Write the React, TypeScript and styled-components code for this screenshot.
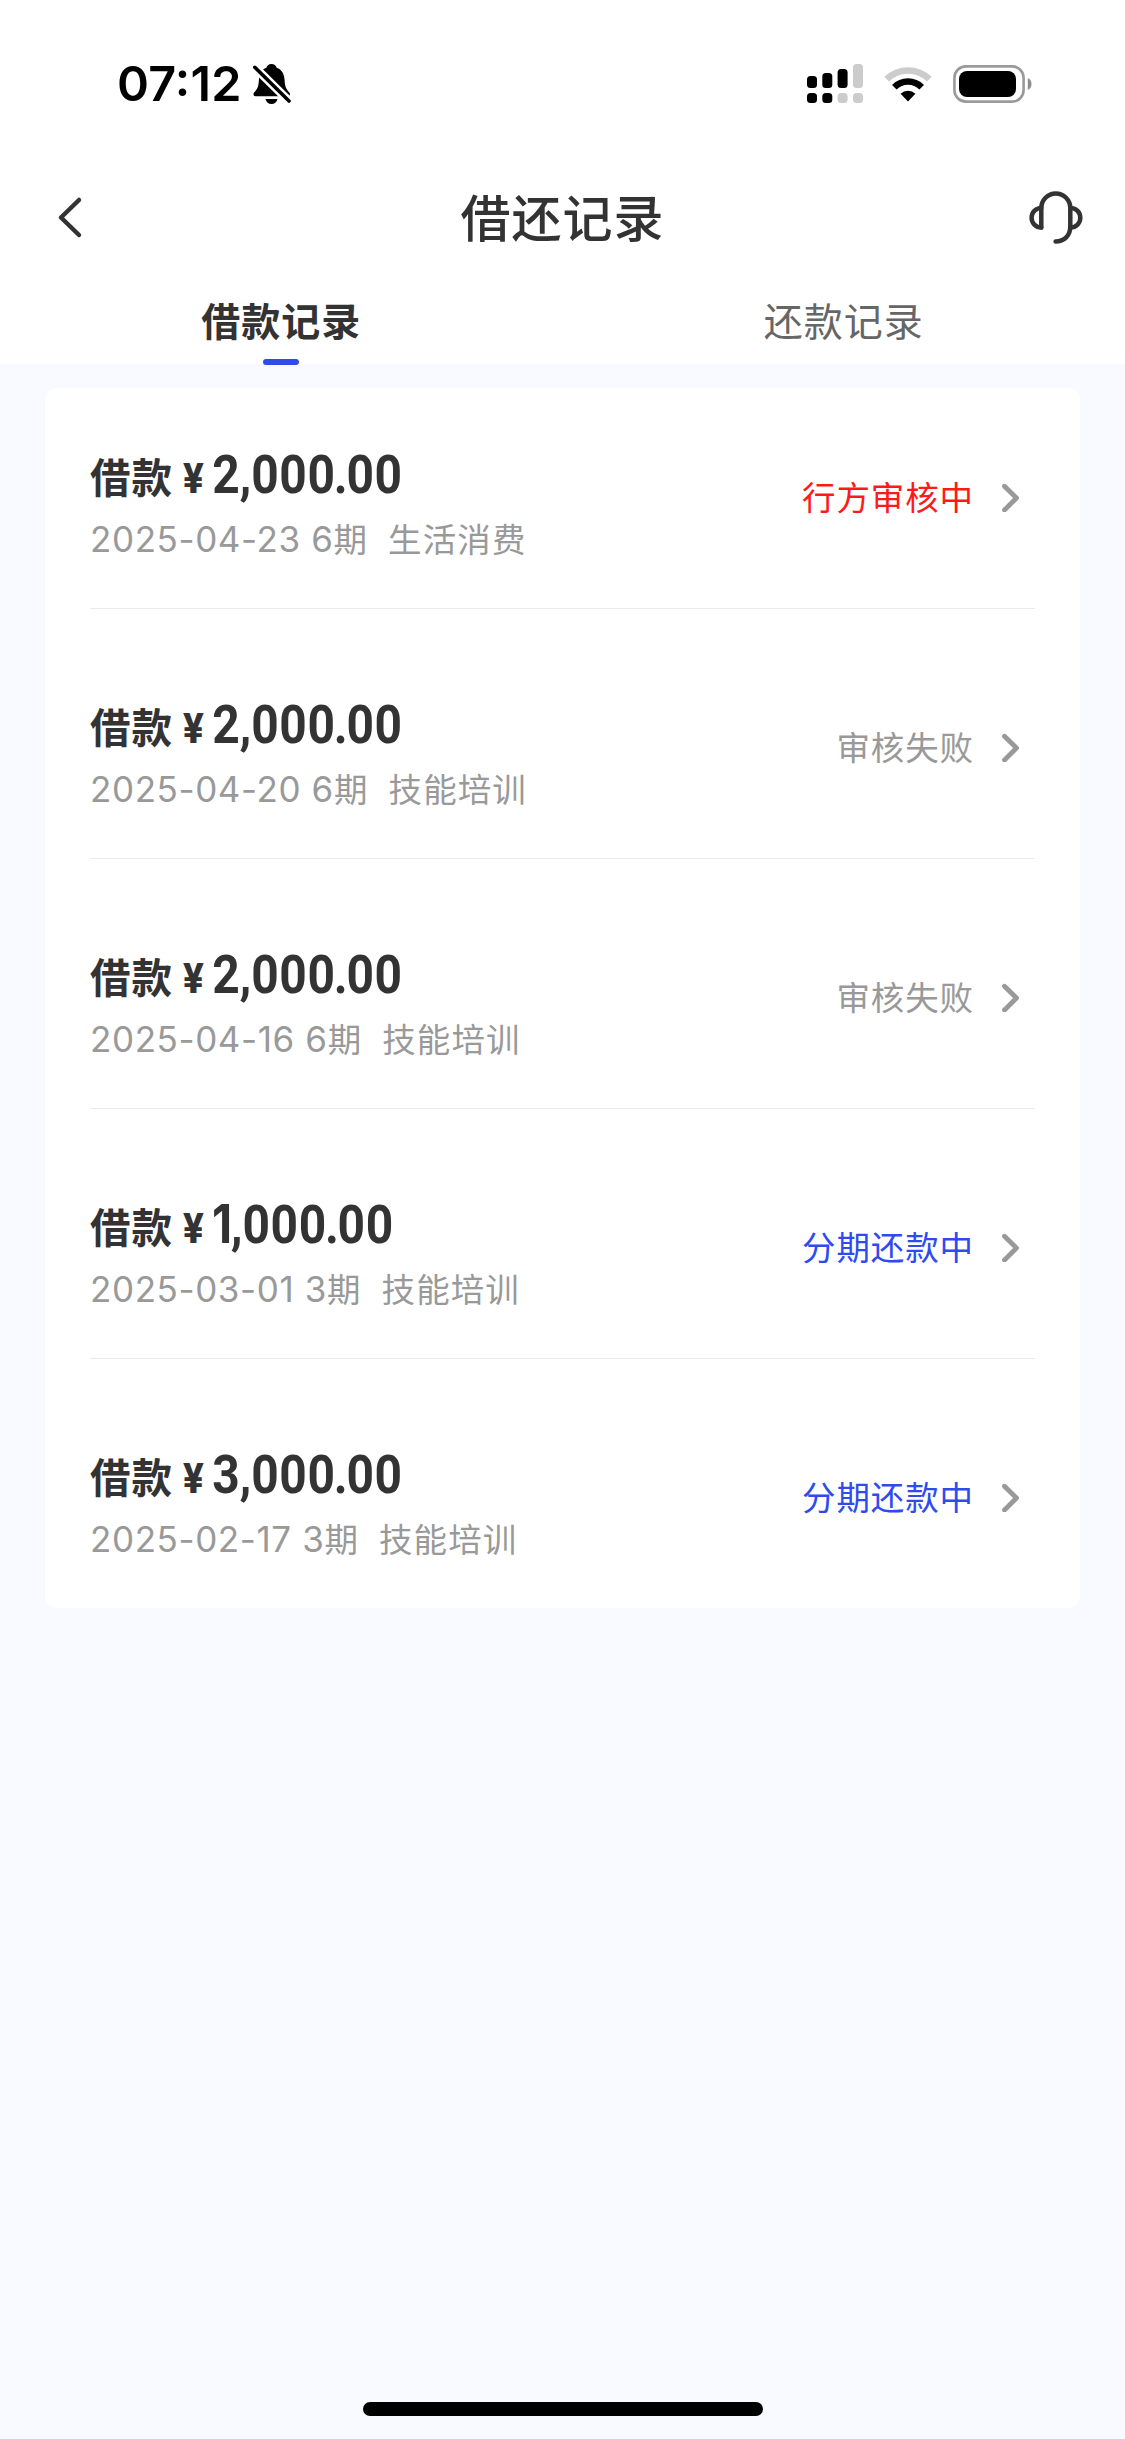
import React from "react";
import styled, { createGlobalStyle } from "styled-components";

const GlobalStyle = createGlobalStyle`
  * { box-sizing: border-box; }
  html, body { margin: 0; padding: 0; background: #f8faff; }
  body { font-family: Inter, "Noto Sans CJK SC", sans-serif; color: #333; }
`;

const Screen = styled.div`
  width: 1125px;
  height: 2439px;
  display: flex;
  flex-direction: column;
  background: #f8faff;
  overflow: hidden;
`;

const Header = styled.header`
  height: 364px;
  background: #fff;
  display: flex;
  flex-direction: column;
`;

const StatusBar = styled.div`
  height: 162px;
  padding: 6px 93px 0 117px;
  display: flex;
  align-items: center;
  justify-content: space-between;
`;

const Cluster = styled.div<{ $gap: number }>`
  display: flex;
  align-items: center;
  gap: ${(p) => p.$gap}px;
`;

const Time = styled.span`
  width: 124px;
  font-size: 48.5px;
  line-height: 58px;
  font-weight: 600;
  letter-spacing: 0.2px;
  font-feature-settings: "case";
  color: #000;
  white-space: nowrap;
`;

const Icon = styled.svg`
  display: block;
  flex: none;
`;

const NavBar = styled.nav`
  height: 110px;
  padding: 0 40px 0 56px;
  display: grid;
  grid-template-columns: 60px 1fr 60px;
  align-items: center;
  & > :last-child { justify-self: end; }
`;

const Title = styled.h1`
  margin: 0;
  padding: 0 16px 5px 0;
  text-align: center;
  font-family: "Noto Sans CJK SC", sans-serif;
  font-size: 50px;
  line-height: 74px;
  font-weight: 500;
  letter-spacing: 1px;
`;

const Tabs = styled.div`
  height: 92px;
  display: grid;
  grid-template-columns: 1fr 1fr;
`;

const Tab = styled.div<{ $active?: boolean }>`
  height: 93px;
  padding-top: 18px;
  display: flex;
  flex-direction: column;
  align-items: center;
  justify-content: space-between;
  font-family: "Noto Sans CJK SC", sans-serif;
  font-size: 39px;
  line-height: 58px;
  letter-spacing: 1px;
  font-weight: ${(p) => (p.$active ? 700 : 400)};
  color: ${(p) => (p.$active ? "#333" : "#666")};
`;

const Indicator = styled.span`
  width: 36px;
  height: 6px;
  border-radius: 3px;
  background: #2f4be8;
`;

const Card = styled.main`
  margin: 24px 45px 0;
  height: 1220px;
  border-radius: 12px;
  background: #fff;
  padding: 0 45px;
  display: flex;
  flex-direction: column;
`;

const Row = styled.div`
  height: 250px;
  padding: 85px 14px 0 0;
  border-bottom: 1px solid #ebebeb;
  display: flex;
  justify-content: space-between;
  &:first-child { height: 221px; padding-top: 56px; }
  &:last-child { height: 249px; border-bottom: 0; }
`;

const Info = styled.div`
  display: flex;
  flex-direction: column;
  gap: 7px;
`;

const AmountLine = styled.div`
  height: 62px;
  display: flex;
  align-items: baseline;
`;

const Label = styled.span`
  width: 93px;
  font-family: "Noto Sans CJK SC", sans-serif;
  font-weight: 700;
  font-size: 40.5px;
  line-height: 60px;
  letter-spacing: 1px;
`;

const Yen = styled.span`
  width: 29px;
  font-family: Roboto, sans-serif;
  font-weight: 800;
  font-size: 42px;
  line-height: 60px;
  transform: scaleX(0.92);
  transform-origin: left;
`;

const Amount = styled.span`
  display: flex;
  align-items: baseline;
  font-family: Roboto, sans-serif;
  font-weight: 700;
  font-size: 54.5px;
  line-height: 60px;
  transform: scaleX(0.88);
  transform-origin: left;
`;

const Glyph = styled.span<{ $w: number }>`
  width: ${(p) => p.$w}px;
  display: flex;
  justify-content: center;
`;

const NarrowOne = styled(Glyph)`
  font-family: Inter, sans-serif;
  font-size: 53px;
  justify-content: flex-start;
`;

const Meta = styled.div`
  height: 50px;
  display: flex;
  align-items: baseline;
  font-family: "Noto Sans CJK SC", sans-serif;
  font-size: 33.5px;
  line-height: 50px;
  letter-spacing: 1.1px;
  color: #999;
`;

const Digits = styled.span`
  font-family: Inter, sans-serif;
  font-size: 35px;
  letter-spacing: 0.6px;
  white-space: pre;
`;

const Purpose = styled.span`
  margin-left: 20px;
`;

const Status = styled.div<{ $tone: string }>`
  height: 50px;
  margin-top: 27px;
  display: flex;
  align-items: center;
  gap: 27px;
  font-family: "Noto Sans CJK SC", sans-serif;
  font-size: 33.5px;
  line-height: 50px;
  letter-spacing: 0.9px;
  color: ${(p) => p.$tone};
`;

const HomeIndicator = styled.div`
  width: 400px;
  height: 14px;
  border-radius: 7px;
  background: #000;
  margin: auto auto 23px 363px;
`;

const records = [
  { amount: "2,000.00", date: "2025-04-23", terms: 6, use: "生活消费", status: "行方审核中", tone: "#ff1a1a" },
  { amount: "2,000.00", date: "2025-04-20", terms: 6, use: "技能培训", status: "审核失败", tone: "#999" },
  { amount: "2,000.00", date: "2025-04-16", terms: 6, use: "技能培训", status: "审核失败", tone: "#999" },
  { amount: "1,000.00", date: "2025-03-01", terms: 3, use: "技能培训", status: "分期还款中", tone: "#2f4bf0" },
  { amount: "3,000.00", date: "2025-02-17", terms: 3, use: "技能培训", status: "分期还款中", tone: "#2f4bf0" },
];

const BellOff = () => (
  <Icon width="38" height="42" viewBox="0 0 38 42">
    <path d="M18.500 1c2.700 0 4.600 1.700 5.200 3.700 5.200 1.800 7.600 6.400 7.900 12.300.3 6.500 1.500 9.200 4.700 12.400 1.200 1.300.9 3.800-1.300 3.800H2.600C.3 33.200-.1 30.700 1.200 29.400c3.200-3.200 4.400-5.900 4.700-12.400.3-5.900 2.700-10.500 7.500-12.300C13.900 2.700 15.800 1 18.500 1z" />
    <path d="M12.500 36h12c-.6 3-3 5-6 5s-5.400-2-6-5z" />
    <path d="M0 2.500 38 40" stroke="#fff" strokeWidth="8.500" />
    <path d="M1.800 4.300 36 38" stroke="#000" strokeWidth="3.600" strokeLinecap="round" />
  </Icon>
);

const Signal = () => (
  <Icon width="56" height="40" viewBox="0 0 56 40">
    <rect x="0" y="12" width="10" height="12" rx="3.500" />
    <rect x="15.300" y="9" width="10" height="15" rx="3.500" />
    <rect x="30.600" y="5" width="10" height="19" rx="3.500" />
    <rect x="46" y="0" width="10" height="24" rx="3.500" fill="#ccc" />
    <rect x="0" y="29" width="10" height="10" rx="3.500" />
    <rect x="15.300" y="29" width="10" height="10" rx="3.500" />
    <rect x="30.600" y="29" width="10" height="10" rx="3.500" fill="#ccc" />
    <rect x="46" y="29" width="10" height="10" rx="3.500" fill="#ccc" />
  </Icon>
);

const Wifi = () => (
  <Icon width="48" height="36" viewBox="0 0 48 36">
    <path d="M2.700 13.200a30.500 30.500 0 0 1 42.600 0" fill="none" stroke="#ccc" strokeWidth="6.500" />
    <path d="M10.300 21.200a19.500 19.500 0 0 1 27.400 0" fill="none" stroke="#000" strokeWidth="6.500" />
    <path d="M16.600 27.700a10.800 10.800 0 0 1 14.800 0L24 35.400z" />
  </Icon>
);

const Battery = () => (
  <Icon width="79" height="38" viewBox="0 0 79 38">
    <rect x="1.400" y="1.400" width="69.200" height="35.200" rx="11.500" fill="none" stroke="#9a9a9a" strokeWidth="2.600" />
    <rect x="6" y="6" width="57" height="26" rx="8" />
    <path d="M74.800 13v12c2.300-1 3.700-3.200 3.700-6s-1.400-5-3.700-6z" fill="#8c8c8c" />
  </Icon>
);

const Back = () => (
  <Icon width="28" height="44" viewBox="0 0 28 44" fill="none" stroke="#333" strokeWidth="4.500" strokeLinecap="round" strokeLinejoin="round">
    <path d="M23 5 5 22.500l18 17.500" />
  </Icon>
);

const Headset = () => (
  <Icon width="56" height="54" viewBox="0 0 56 54" fill="none" stroke="#333" strokeWidth="4.500" strokeLinecap="round" strokeLinejoin="round">
    <path d="M12.300 37.500V18a14.500 14.500 0 0 1 29 0V36.500c0 9-6 15-14.700 15" />
    <path d="M12.300 18C6.600 18 2.600 22.500 2.600 27.800s4 9.700 9.700 9.700M41.600 18c5.700 0 9.700 4.500 9.700 9.800s-4 9.700-9.700 9.700" />
  </Icon>
);

const Chevron = () => (
  <Icon width="20" height="32" viewBox="0 0 20 32" fill="none" stroke="#999" strokeWidth="4.800" strokeLinecap="round" strokeLinejoin="round">
    <path d="M3.500 6.200 15.500 18l-12 12" />
  </Icon>
);

const renderGlyph = (c: string, i: number) =>
  c === "1" ? (
    <NarrowOne key={i} $w={22}>{c}</NarrowOne>
  ) : (
    <Glyph key={i} $w={c === "," || c === "." ? 12.2 : 32}>{c}</Glyph>
  );

export default function App() {
  return (
    <Screen>
      <GlobalStyle />
      <Header>
        <StatusBar>
          <Cluster $gap={12}>
            <Time>07:12</Time>
            <BellOff />
          </Cluster>
          <Cluster $gap={21}>
            <Signal />
            <Wifi />
            <Battery />
          </Cluster>
        </StatusBar>
        <NavBar>
          <Back />
          <Title>借还记录</Title>
          <Headset />
        </NavBar>
        <Tabs>
          <Tab $active>
            借款记录
            <Indicator />
          </Tab>
          <Tab>还款记录</Tab>
        </Tabs>
      </Header>
      <Card>
        {records.map((r) => (
          <Row key={r.date}>
            <Info>
              <AmountLine>
                <Label>借款</Label>
                <Yen>¥</Yen>
                <Amount>{r.amount.split("").map(renderGlyph)}</Amount>
              </AmountLine>
              <Meta>
                <Digits>{`${r.date} ${r.terms}`}</Digits>期
                <Purpose>{r.use}</Purpose>
              </Meta>
            </Info>
            <Status $tone={r.tone}>
              {r.status}
              <Chevron />
            </Status>
          </Row>
        ))}
      </Card>
      <HomeIndicator />
    </Screen>
  );
}
